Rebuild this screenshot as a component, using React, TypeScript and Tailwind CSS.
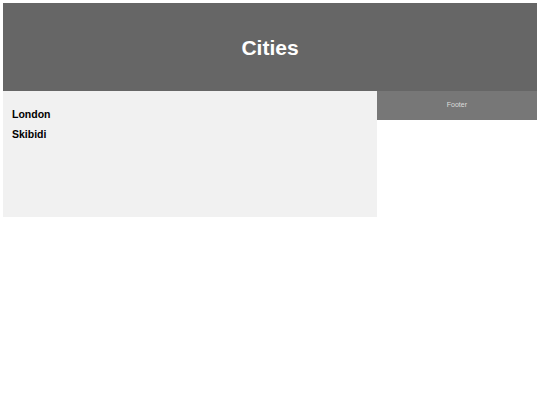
export default function App() {
	return (
		<div className="p-[3px] font-['Liberation_Sans',Arial,sans-serif]">
			<header className="h-[88px] bg-[#666666] flex items-center justify-center">
				<h1 className="text-white text-[21px] font-bold leading-none">Cities</h1>
			</header>
			<div className="flex items-start">
				<nav className="w-[70%] h-[126px] bg-[#f1f1f1] pl-[9px] pt-[13px]">
					<ul className="text-[10.5px] leading-[20px] font-bold text-black">
						<li>London</li>
						<li>Skibidi</li>
					</ul>
				</nav>
				<footer className="w-[30%] h-[29px] bg-[#777777] flex items-center justify-center">
					<span className="text-[7px] text-[#dddddd]">Footer</span>
				</footer>
			</div>
		</div>
	);
}
